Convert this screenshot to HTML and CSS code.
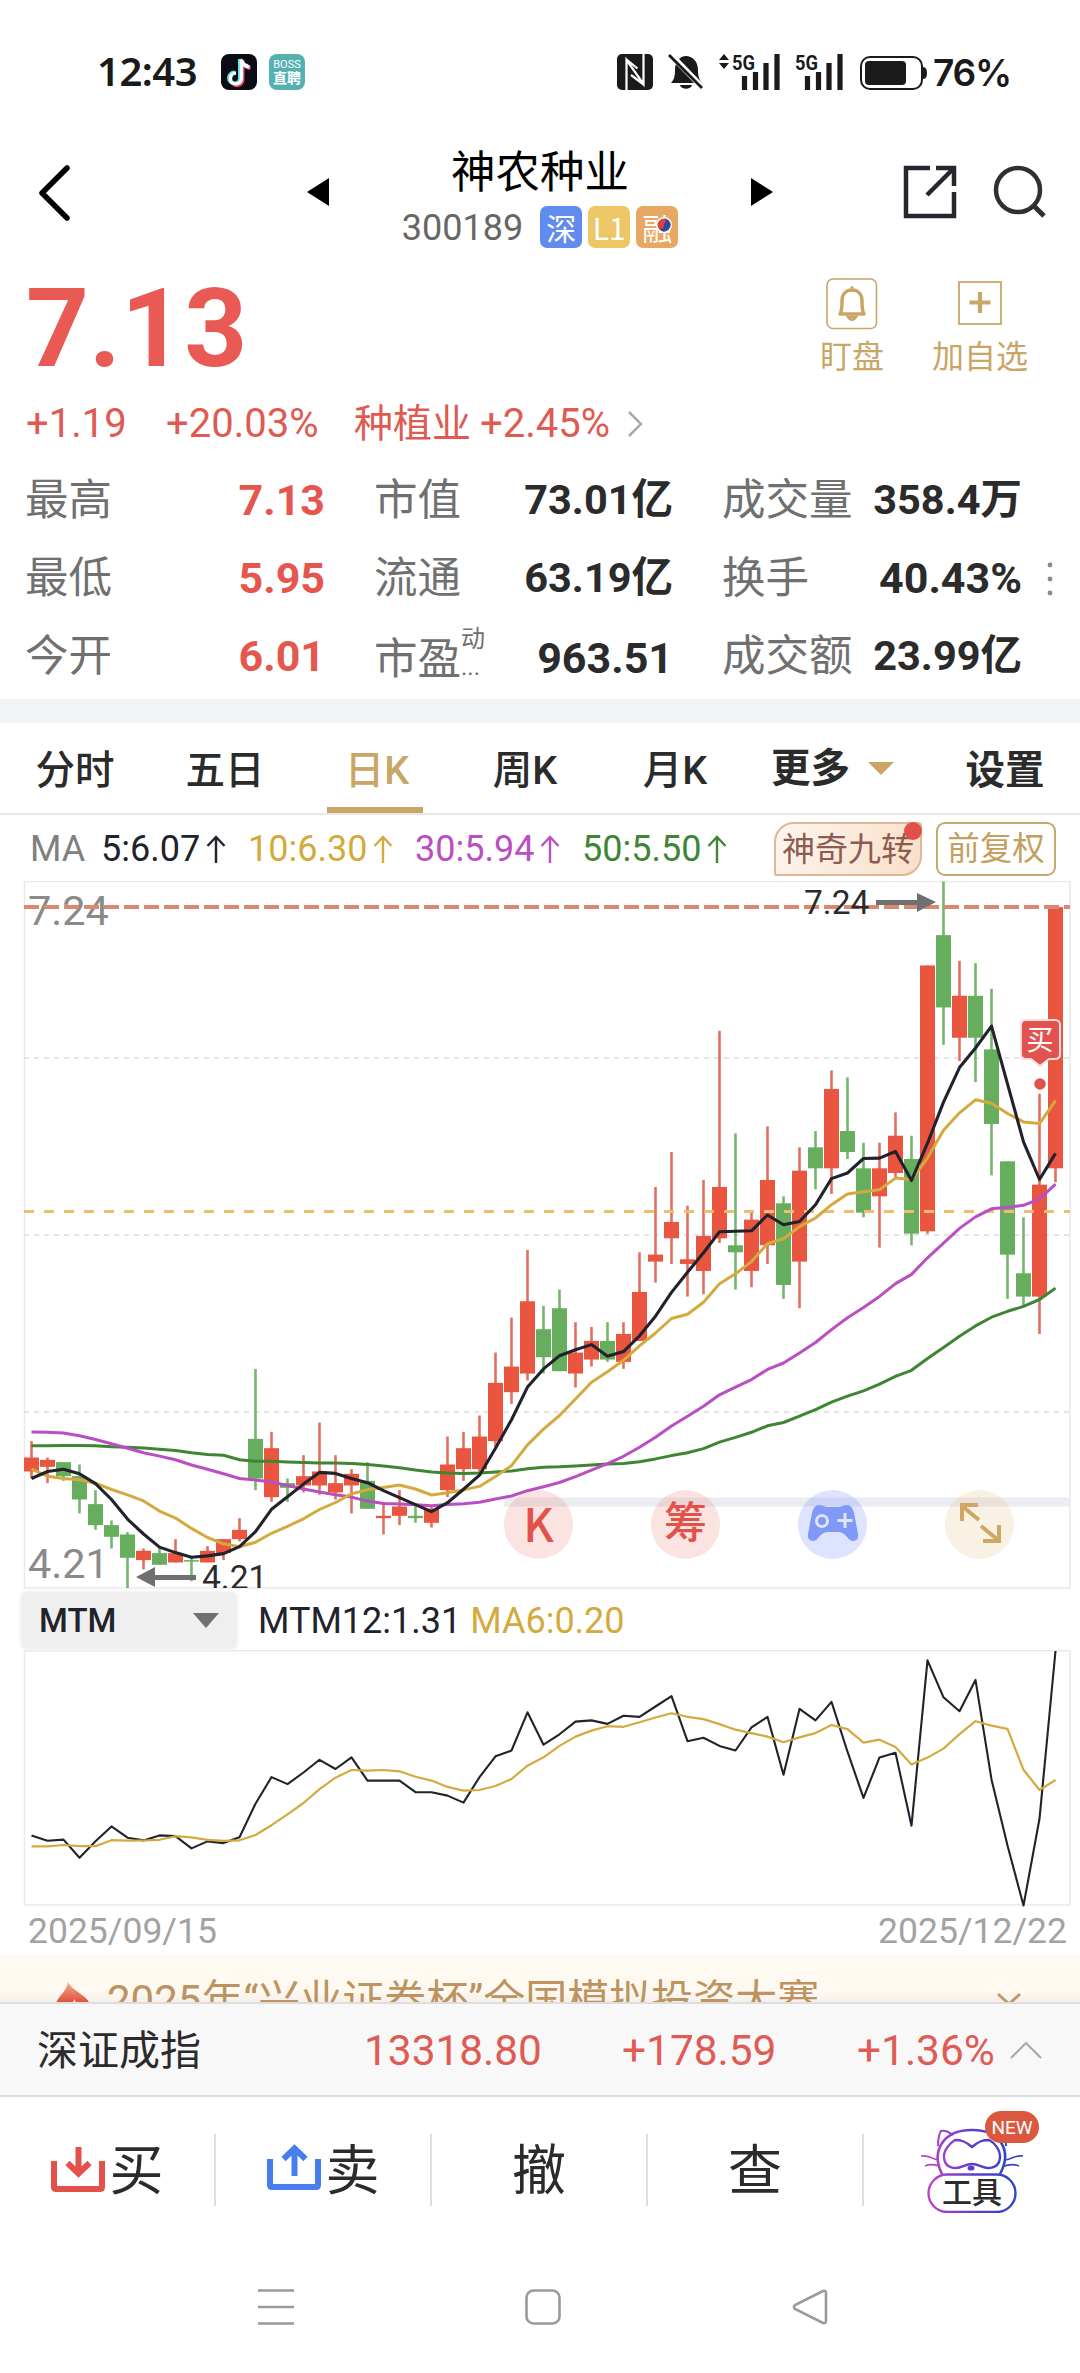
FILE: index.html
```html
<!DOCTYPE html>
<html lang="zh-CN">
<head>
    <meta charset="UTF-8">
    <meta name="viewport" content="width=device-width, initial-scale=1.0">
    <title>神农种业 300189</title>
    <link rel="stylesheet" href="styles.css">
</head>
<body>

<div class="status-bar">
    <span class="time">12:43</span>
    <svg class="app-icon" width="36" height="36" viewBox="0 0 36 36">
        <rect width="36" height="36" rx="8" fill="#0b0b16"/>
        <g fill="none">
            <path d="M19 5v19a5.500 5.500 0 1 1-5.500-5.500M19 5c1 4 4 6.500 8 7" stroke="#5fe3df" stroke-width="4"/>
            <path d="M21.500 7v19a5.500 5.500 0 0 1-9 4M21.500 7c1 4 4 6.500 8 7" stroke="#ee4058" stroke-width="4"/>
            <path d="M20.500 5.500v19a5.500 5.500 0 1 1-5.500-5.500M20.500 6c1 4 4 6.500 8 7" stroke="#fff" stroke-width="3.400"/>
        </g>
    </svg>
    <div class="boss-icon"><span>BOSS</span><b>直聘</b></div>
    <svg class="status-icons" width="320" height="42" viewBox="0 0 320 42">
        <rect x="0" y="3" width="36" height="36" rx="5" fill="#1a1a1a"/>
        <path d="M9.500 38V9l17 24V4M26.500 3v30.500L14 24M9.500 39V8.500l11 9" fill="none" stroke="#fff" stroke-width="2.200"/>
        <path d="M54 32c3-3 4-7 4-13 0-8 5-14 11-14s12 5 12 14c0 6 1 9 4 13zM63 34h12c-1 5-11 5-12 0z" fill="#1a1a1a"/>
        <path d="M54 4l32 33" stroke="#fff" stroke-width="6"/>
        <path d="M52 4l33 33" stroke="#1a1a1a" stroke-width="2.800"/>
        <path d="M102 9l5-6 5 6zM102 12h10l-5 6z" fill="#1a1a1a"/>
        <text x="115" y="19" class="net" textLength="23" lengthAdjust="spacingAndGlyphs">5G</text>
        <path d="M127.500 25v14M138.500 21v18M149 12v27M160 3v36" stroke="#1a1a1a" stroke-width="5.200"/>
        <text x="178" y="19" class="net" textLength="23" lengthAdjust="spacingAndGlyphs">5G</text>
        <path d="M190.500 25v14M201.500 21v18M212 12v27M223 3v36" stroke="#1a1a1a" stroke-width="5.200"/>
        <rect x="244" y="6" width="61" height="32" rx="9" fill="none" stroke="#1a1a1a" stroke-width="2"/>
        <rect x="248" y="10" width="41" height="24" rx="4" fill="#1a1a1a"/>
        <path d="M306 16q4 0 4 6t-4 6z" fill="#1a1a1a"/>
    </svg>
    <span class="battery">76%</span>
</div>

<header class="header">
    <svg class="back" width="34" height="58" viewBox="0 0 34 58"><path d="M30 4L5 29l25 25" fill="none" stroke="#000" stroke-width="5.500" stroke-linecap="round" stroke-linejoin="round"/></svg>
    <svg class="prev" width="22" height="28" viewBox="0 0 22 28"><path d="M22 0v28L0 14z"/></svg>
    <div class="stock">
        <h1>神农种业</h1>
        <div class="stock-code">
            <span>300189</span>
            <i class="badge blue">深</i>
            <i class="badge yellow">L1</i>
            <i class="badge orange">融
                <svg class="taiji" width="16" height="16" viewBox="0 0 16 16">
                    <circle cx="8" cy="8" r="8" fill="#fff"/>
                    <circle cx="8" cy="8" r="6.500" fill="#d8423f"/>
                    <path d="M8 1.500a6.500 6.500 0 0 1 0 13 4 4 0 0 1-4-3c3 1 4-1 4-3.500s2-3 2-4-1-2-2-2.500z" fill="#2c4ba0"/>
                </svg>
            </i>
        </div>
    </div>
    <svg class="next" width="22" height="28" viewBox="0 0 22 28"><path d="M0 0v28l22-14z"/></svg>
    <svg class="share" width="54" height="54" viewBox="0 0 54 54"><path d="M27 3H3v48h48V27M33 3h18v18M50 4L24 30" fill="none" stroke="#26262e" stroke-width="4.500"/></svg>
    <svg class="search" width="54" height="54" viewBox="0 0 54 54"><circle cx="25" cy="25" r="22" fill="none" stroke="#303030" stroke-width="4.500"/><path d="M40 40l11 11" stroke="#303030" stroke-width="5"/></svg>
</header>

<section class="quote">
    <div class="price">7.13</div>
    <div class="actions">
        <div class="action">
            <svg width="52" height="52" viewBox="0 0 52 52" fill="none" stroke="#c9a666">
                <rect x="1" y="1" width="49.500" height="49.500" rx="6" stroke-width="1.600"/>
                <path d="M14 36c2-3 2-6 2-13 0-7 4-11 10-11s10 4 10 11c0 7 0 10 2 13z" stroke-width="3.500" stroke-linejoin="round"/>
                <path d="M22 39h8q-4 6-8 0zM24.500 9.500h3" stroke-width="2.500"/>
            </svg>
            <span>盯盘</span>
        </div>
        <div class="action">
            <svg width="52" height="52" viewBox="0 0 52 52" fill="none" stroke="#c9a666">
                <rect x="5" y="4" width="42" height="42" stroke-width="1.800"/>
                <path d="M26 14v21M15.500 24.500h21" stroke-width="4.200"/>
            </svg>
            <span>加自选</span>
        </div>
    </div>
</section>

<div class="change">
    <span class="diff">+1.19</span>
    <span class="percent">+20.03%</span>
    <span class="sector-name">种植业</span>
    <span class="sector">+2.45%</span>
    <svg width="16" height="28" viewBox="0 0 16 28"><path d="M2 2l12 12L2 26" fill="none" stroke="#aaa" stroke-width="2.500"/></svg>
</div>

<section class="stats">
    <div class="stat"><span>最高</span><b class="up">7.13</b></div>
    <div class="stat"><span>市值</span><b class="unit">73.01亿</b></div>
    <div class="stat"><span>成交量</span><b class="unit">358.4万</b></div>
    <div class="stat"><span>最低</span><b class="up">5.95</b></div>
    <div class="stat"><span>流通</span><b class="unit">63.19亿</b></div>
    <div class="stat"><span>换手</span><b>40.43%</b></div>
    <div class="stat"><span>今开</span><b class="up">6.01</b></div>
    <div class="stat low"><span>市盈</span><small>动<br>...</small><b>963.51</b></div>
    <div class="stat"><span>成交额</span><b class="unit">23.99亿</b></div>
    <svg class="dots" width="6" height="36" viewBox="0 0 6 36" fill="#8a8a8a"><circle cx="3" cy="4" r="2.400"/><circle cx="3" cy="18" r="2.400"/><circle cx="3" cy="32" r="2.400"/></svg>
</section>

<nav class="tabs">
    <span>分时</span>
    <span>五日</span>
    <span class="active">日K</span>
    <span>周K</span>
    <span>月K</span>
    <span class="more">更多<i class="caret"></i></span>
    <span class="setting">设置</span>
</nav>

<div class="ma-row">
    <span class="ma-title">MA</span>
    <span class="ma ma5">5:6.07<svg width="20" height="28" viewBox="0 0 20 28"><path d="M10 28V2M1.500 11L10 2l8.500 9"/></svg></span>
    <span class="ma ma10">10:6.30<svg width="20" height="28" viewBox="0 0 20 28"><path d="M10 28V2M1.500 11L10 2l8.500 9"/></svg></span>
    <span class="ma ma30">30:5.94<svg width="20" height="28" viewBox="0 0 20 28"><path d="M10 28V2M1.500 11L10 2l8.500 9"/></svg></span>
    <span class="ma ma50">50:5.50<svg width="20" height="28" viewBox="0 0 20 28"><path d="M10 28V2M1.500 11L10 2l8.500 9"/></svg></span>
    <span class="btn-nine">神奇九转</span>
    <span class="btn-fq">前复权</span>
</div>

<div class="kline">
    <svg id="kline" width="1080" height="712" viewBox="0 0 1080 712"></svg>
    <div class="float-buttons">
        <span class="round red latin">K</span>
        <span class="round red">筹</span>
        <span class="round game">
            <svg width="52" height="38" viewBox="0 0 52 38">
                <path d="M12 1q4 0 7 2h14q3-2 7-2 5 0 7 8l4 21q1 7-5 7-3 0-6-4-4-5-9-5H21q-5 0-9 5-3 4-6 4-6 0-5-7L5 9q2-8 7-8z" fill="#8098f6"/>
                <circle cx="15" cy="17" r="5.500" fill="none" stroke="#dfe4ff" stroke-width="3"/>
                <path d="M38 9v15M30.500 16.500h15" stroke="#dfe4ff" stroke-width="3"/>
            </svg>
        </span>
        <span class="round full">
            <svg width="42" height="42" viewBox="0 0 42 42" fill="none" stroke="#cfa665" stroke-width="4">
                <path d="M3 19V3h16M3 4l17 14M40 23v16H24M39 38L22 24"/>
            </svg>
        </span>
    </div>
</div>

<div class="indicator">
    <div class="select">MTM<i class="caret grey"></i></div>
    <span>MTM12:1.31</span>
    <span class="gold">MA6:0.20</span>
</div>
<svg id="mtm" class="mtm" width="1080" height="259" viewBox="0 0 1080 259"></svg>
<div class="dates"><span>2025/09/15</span><span>2025/12/22</span></div>

<div class="banner">
    <svg class="flame" width="38" height="40" viewBox="0 0 38 40">
        <defs><linearGradient id="fire" x1="0" y1="0" x2="0" y2="1"><stop offset="0" stop-color="#f3b184"/><stop offset=".5" stop-color="#e2503f"/></linearGradient></defs>
        <path d="M14 0c-1 10-13 16-13 26 0 8 8 14 18 14s17-7 17-15c0-6-4-9-8-12-5-4-12-8-14-13z" fill="url(#fire)"/>
        <path d="M20 17c0 5-5 8-5 12 0 3 3 5 6 5s6-2 6-6-5-6-7-11z" fill="#fff"/>
    </svg>
    <span>2025年“兴业证券杯”全国模拟投资大赛</span>
    <svg class="down" width="26" height="14" viewBox="0 0 26 14"><path d="M2 2l11 10L24 2" fill="none" stroke="#c19a6b" stroke-width="3"/></svg>
</div>

<div class="index-bar">
    <span class="name">深证成指</span>
    <span class="point">13318.80</span>
    <span class="amount">+178.59</span>
    <span class="rate">+1.36%</span>
    <svg width="32" height="18" viewBox="0 0 32 18"><path d="M1 17L16 2l15 15" fill="none" stroke="#aaa" stroke-width="2.200"/></svg>
</div>

<footer class="trade">
    <div class="trade-item">
        <svg width="54" height="52" viewBox="0 0 54 52" fill="none" stroke="#e2524b"><path d="M3 17v26q0 2 2 2h44q2 0 2-2V17" stroke-width="6"/><path d="M27.500 3v25M16.500 19l11 10.500 11-10.500" stroke-width="6"/></svg>
        <span>买</span>
    </div>
    <div class="trade-item">
        <svg width="54" height="52" viewBox="0 0 54 52" fill="none" stroke="#477ded"><path d="M3 15v26q0 2 2 2h44q2 0 2-2V15" stroke-width="6"/><path d="M27.500 32V6M16.500 15l11-10.500 11 10.500" stroke-width="6"/></svg>
        <span>卖</span>
    </div>
    <div class="trade-item"><span>撤</span></div>
    <div class="trade-item"><span>查</span></div>
    <div class="trade-item">
        <div class="tool">
            <svg width="104" height="86" viewBox="0 0 104 86" fill="none" stroke="url(#neon)" stroke-width="2">
                <defs><linearGradient id="neon" gradientUnits="userSpaceOnUse" x1="10" y1="0" x2="96" y2="0"><stop offset="0" stop-color="#bb43c5"/><stop offset=".5" stop-color="#5b3ed0"/><stop offset="1" stop-color="#2948c4"/></linearGradient></defs>
                <path d="M22 47c-11-22 0-44 30-44s40 22 28 44" stroke-width="2.600"/>
                <path d="M18 19c0-8 1-12 3-15 4-1 8 1 12 4M86 19c0-8-1-12-3-15"/>
                <path d="M52 20C45 14 41 13 35 13c-5 3-11 10-11 16 0 8 4 12 12 12 6 0 9-4 16-4s10 4 16 4c8 0 12-4 12-12 0-6-5-13-11-16-6 0-10 1-17 7z" stroke-width="2.400"/>
                <path d="M1 29c9-1 10 3 18 4M5 39c6-3 10-1 15 0M103 29c-9-1-10 3-18 4M99 39c-6-3-10-1-15 0" stroke-width="1.600"/>
                <ellipse cx="51" cy="41" rx="3.500" ry="2.600" fill="#5b3ed0" stroke="none"/>
                <rect x="8.500" y="47.500" width="87" height="37.500" rx="18.700" fill="#fff" stroke-width="2.400"/>
            </svg>
            <b>工具</b>
            <em>NEW</em>
        </div>
    </div>
</footer>

<div class="sys-nav">
    <svg width="36" height="36" viewBox="0 0 36 36"><path d="M0 1.500h36M0 18h36M0 34.500h36"/></svg>
    <svg width="36" height="36" viewBox="0 0 36 36"><rect x="1.500" y="1.500" width="33" height="33" rx="7"/></svg>
    <svg width="36" height="36" viewBox="0 0 36 36"><path d="M31 2L3 16q-2 2 0 4l28 14q3 1 3-2V4q0-3-3-2z"/></svg>
</div>

<script src="chart.js"></script>
</body>
</html>
```
FILE: styles.css
```css
* {
    box-sizing: border-box;
}
body {
    margin: 0;
    width: 1080px;
    height: 2373px;
    overflow: hidden;
    background-color: #fff;
    color: #2b2b2b;
    font-family: Roboto, "Noto Sans CJK SC", sans-serif;
    display: flex;
    flex-direction: column;
}
body > * {
    flex: none;
}
svg {
    display: block;
    flex: none;
}
span, b {
    white-space: nowrap;
}

/* status bar */
.status-bar {
    height: 144px;
    padding-left: 97px;
    display: flex;
    align-items: center;
    color: #1a1a1a;
}
.time {
    width: 124px;
    font: 600 40px "Noto Sans", sans-serif;
    letter-spacing: -0.5px;
    margin-top: -3px;
}
.boss-icon {
    width: 36px;
    height: 36px;
    margin-left: 12px;
    border-radius: 8px;
    background-color: #55b1b1;
    color: #fff;
    text-align: center;
    font-size: 11px;
    line-height: 12px;
    padding-top: 5px;
    display: flex;
    flex-direction: column;
}
.boss-icon b {
    font-size: 14px;
    line-height: 15px;
}
.status-icons {
    margin-left: 312px;
}
.net {
    font: 700 21px Roboto, sans-serif;
    fill: #1a1a1a;
}
.battery {
    margin-left: -4px;
    margin-top: 1px;
    font: 600 37px Inter, sans-serif;
    letter-spacing: -1.2px;
}

/* title */
.header {
    height: 112px;
    display: flex;
    padding-left: 37px;
}
.back {
    margin-top: 20px;
}
.prev {
    margin: 34px 0 0 236px;
}
.stock {
    width: 422px;
    text-align: center;
}
.stock h1 {
    margin: 4px 0 0;
    font-size: 44.5px;
    line-height: 50px;
    font-weight: 400;
    color: #000;
}
.stock-code {
    display: flex;
    justify-content: center;
    align-items: center;
    gap: 6px;
    margin-top: 6px;
    font-size: 36px;
    color: #666;
}
.stock-code span {
    margin: 3px 11px 0 0;
}
.badge {
    position: relative;
    width: 42px;
    height: 42px;
    border-radius: 7px;
    font-style: normal;
    font-size: 30px;
    line-height: 42px;
    color: #fff;
    font-family: "Noto Sans CJK SC", sans-serif;
}
.blue { background-color: #5f8cee; }
.yellow { background-color: #edc766; }
.orange { background-color: #e8a763; }
.taiji {
    position: absolute;
    left: 20px;
    top: 11px;
}
.next {
    margin-top: 34px;
}
.share {
    margin: 21px 0 0 130px;
}
.search {
    margin: 21px 0 0 36px;
}

/* price */
.quote {
    height: 132px;
    padding-left: 26px;
    display: flex;
    justify-content: space-between;
    color: #ea5a54;
}
.price {
    font-size: 110px;
    line-height: 146px;
    font-weight: 700;
}
.actions {
    display: flex;
    padding: 22px 52px 0 0;
    gap: 48px;
}
.action {
    display: flex;
    flex-direction: column;
    align-items: center;
    color: #c9a666;
    font-size: 32px;
    line-height: 54px;
}
.change {
    height: 72px;
    padding-left: 26px;
    display: flex;
    align-items: center;
    color: #e05a52;
    font-size: 40px;
    line-height: 68px;
}
.diff {
    width: 140px;
}
.percent {
    width: 188px;
}
.sector-name {
    font-size: 39px;
    width: 126px;
}
.sector {
    width: 147px;
}

/* figures */
.stats {
    position: relative;
    height: 239px;
    padding: 1px 58px 0 25px;
    display: grid;
    grid-template-columns: 300px 299px 300px;
    column-gap: 49px;
    grid-auto-rows: 78px;
}
.stat {
    display: flex;
    align-items: center;
    justify-content: space-between;
    font-size: 43px;
    color: #707070;
}
.stat span {
    font-size: 43.5px;
    padding-bottom: 8px;
}
.stat b {
    color: #2b2b2b;
    margin-left: auto;
    padding-bottom: 1px;
}
.stat .up {
    color: #e5564f;
}
.stat .unit {
    font-size: 41.5px;
    padding-bottom: 8px;
}
.stat.low {
    padding-top: 6px;
}
.stat.low b {
    padding-bottom: 3px;
}
.stat small {
    font-size: 24px;
    line-height: 28px;
    margin-top: -12px;
}
.dots {
    position: absolute;
    left: 1047px;
    top: 101px;
}

/* period tabs */
.tabs {
    height: 116px;
    border-top: 24px solid #f2f3f5;
    border-bottom: 2px solid #e8e8e8;
    display: flex;
    align-items: center;
    font-size: 39.5px;
    font-weight: 500;
}
.tabs span {
    width: 150px;
    height: 90px;
    line-height: 95px;
    text-align: center;
}
.tabs .active {
    color: #c9a666;
    position: relative;
    padding-left: 4px;
}
.tabs .active::after {
    content: "";
    position: absolute;
    left: 27px;
    bottom: 0;
    width: 96px;
    height: 6px;
    background-color: #c9a666;
}
.tabs .more {
    width: 180px;
    padding-left: 21px;
    display: flex;
    align-items: center;
    gap: 18px;
    font-weight: 700;
}
.tabs .setting {
    font-weight: 700;
}
.caret {
    width: 0;
    height: 0;
    border: 13px solid transparent;
    border-top: 13px solid #c9a666;
    border-bottom: 0;
}

/* moving averages */
.ma-row {
    height: 66px;
    padding: 2px 24px 0 30px;
    display: flex;
    align-items: center;
    font-size: 36px;
}
.ma-title {
    width: 71px;
    color: #808080;
}
.ma {
    display: flex;
    align-items: center;
    gap: 6px;
    width: 167px;
}
.ma svg {
    fill: none;
    stroke: currentColor;
    stroke-width: 2.4;
}
.ma5 { color: #22222c; width: 147px; }
.ma10 { color: #d3aa3e; }
.ma30 { color: #b94fc0; }
.ma50 { color: #3f8534; }
.btn-nine {
    position: relative;
    margin-left: auto;
    width: 148px;
    height: 54px;
    border: 2px solid #dfb795;
    border-radius: 20px 4px 20px 2px;
    background: linear-gradient(110deg, #fdf5ee, #fadfc9);
    color: #8d5c4e;
    font-size: 33px;
    line-height: 51px;
    text-align: center;
}
.btn-nine::after {
    content: "";
    position: absolute;
    right: -2px;
    top: -2px;
    width: 18px;
    height: 18px;
    border-radius: 50%;
    background-color: #e2504a;
}
.btn-fq {
    margin-left: 14px;
    width: 120px;
    height: 54px;
    border: 2px solid #c4a86c;
    border-radius: 9px;
    color: #c4a05e;
    font-size: 32.5px;
    line-height: 50px;
    text-align: center;
}

/* charts */
.kline {
    position: relative;
    height: 712px;
}
.grid-text {
    font-size: 41.5px;
    fill: #8a8a8a;
}
.mark-text {
    font-size: 33.5px;
    fill: #2b2b2b;
}
.buy-text {
    font-size: 27px;
    fill: #fff;
    text-anchor: middle;
}
.float-buttons {
    position: absolute;
    left: 504px;
    top: 609px;
    display: flex;
    gap: 78px;
}
.round {
    width: 69px;
    height: 69px;
    border-radius: 50%;
    display: flex;
    align-items: center;
    justify-content: center;
    font-size: 43px;
    line-height: 60px;
    font-weight: 500;
    padding-bottom: 3px;
}
.red {
    background-color: rgba(226, 80, 60, 0.16);
    color: #e2524b;
}
.latin {
    font-family: "Noto Sans CJK SC", sans-serif;
    font-size: 46px;
    padding-bottom: 6px;
}
.game {
    background-color: rgba(90, 120, 255, 0.2);
}
.full {
    background-color: rgba(222, 170, 95, 0.16);
}
.indicator {
    height: 57px;
    padding: 0 0 2px 22px;
    display: flex;
    align-items: center;
    font-size: 36px;
    color: #22222c;
}
.select {
    width: 214px;
    height: 55px;
    padding: 0 17px 0 17px;
    border-radius: 4px;
    background-color: #efefef;
    box-shadow: 0 0 5px #ddd;
    display: flex;
    align-items: center;
    justify-content: space-between;
    font-size: 33px;
    font-weight: 500;
    margin-right: 22px;
}
.caret.grey {
    border-top: 15px solid #707070;
    border-bottom: 0;
}
.gold {
    color: #d3aa3e;
    margin-left: 9px;
}
.dates {
    height: 46px;
    padding: 0 13px 0 28px;
    display: flex;
    justify-content: space-between;
    font-size: 35.5px;
    line-height: 45px;
    color: #a2a2a2;
}
.banner {
    height: 47px;
    overflow: hidden;
    background: linear-gradient(#fefaf2 75%, #f5f1ea);
    display: flex;
    padding-left: 54px;
    font-size: 42px;
    line-height: 92px;
    color: #bd935f;
}
.flame {
    margin: 27px 15px 0 0;
}
.down {
    margin: 37px 58px 0 auto;
}

/* index */
.index-bar {
    height: 95px;
    border-top: 2px solid #dedede;
    border-bottom: 2px solid #dedede;
    background-color: #f8f8f8;
    padding: 2px 38px 0 37px;
    display: flex;
    align-items: center;
    font-size: 42.4px;
    line-height: 92px;
    color: #de5c55;
}
.index-bar svg {
    margin-top: -2px;
}
.name {
    width: 327px;
    font-size: 41px;
    color: #2b2b2b;
}
.point {
    width: 258px;
}
.amount {
    width: 235px;
}
.rate {
    width: 153px;
}
.trade {
    height: 145px;
    display: flex;
    align-items: center;
}
.trade-item {
    width: 216px;
    height: 72px;
    display: flex;
    align-items: center;
    justify-content: center;
    gap: 5px;
    font-size: 54px;
    line-height: 72px;
    border-right: 2px solid #e0e0e0;
}
.trade-item:last-child {
    border-right: 0;
}
.trade-item span {
    padding-top: 5px;
}
.tool {
    position: relative;
    width: 104px;
    height: 86px;
}
.tool b {
    position: absolute;
    left: 22px;
    top: 46px;
    font-size: 30px;
    line-height: 40px;
    font-weight: 500;
}
.tool em {
    position: absolute;
    left: 65px;
    top: -16px;
    width: 54px;
    height: 32px;
    border-radius: 16px;
    background-color: #db583f;
    color: #fff;
    font: 19px/33px Roboto, sans-serif;
    text-align: center;
}
.sys-nav {
    padding: 47px 252px 0 258px;
    display: flex;
    justify-content: space-between;
}
.sys-nav svg {
    fill: none;
    stroke: #9a9a9a;
    stroke-width: 2.6;
}
```
FILE: chart.js
```js
// [up, high, body top, body bottom, low]
const candles = [
    [1,4.84,4.77,4.71,4.68],[1,4.77,4.76,4.73,4.66],[0,4.75,4.75,4.69,4.67],[0,4.74,4.69,4.59,4.53],
    [0,4.63,4.57,4.48,4.46],[0,4.50,4.48,4.43,4.38],[0,4.45,4.44,4.34,4.21],[1,4.38,4.37,4.33,4.29],
    [0,4.39,4.36,4.31,4.31],[1,4.42,4.36,4.32,4.32],[0,4.34,4.33,4.33,4.24],[1,4.39,4.37,4.32,4.32],
    [1,4.42,4.42,4.36,4.33],[1,4.51,4.46,4.42,4.41],[0,5.15,4.85,4.68,4.63],[1,4.88,4.81,4.60,4.58],
    [0,4.68,4.66,4.64,4.58],[1,4.78,4.69,4.65,4.62],[1,4.92,4.71,4.65,4.61],[1,4.78,4.66,4.62,4.59],
    [1,4.72,4.70,4.65,4.53],[0,4.75,4.67,4.55,4.55],[1,4.58,4.52,4.51,4.44],[1,4.63,4.56,4.52,4.48],
    [0,4.57,4.52,4.51,4.49],[1,4.56,4.55,4.49,4.47],[1,4.86,4.74,4.63,4.60],[1,4.88,4.81,4.72,4.67],
    [1,4.95,4.86,4.72,4.70],[1,5.22,5.09,4.84,4.81],[1,5.37,5.16,5.05,5.00],[1,5.66,5.44,5.13,5.10],
    [0,5.42,5.32,5.20,5.13],[0,5.49,5.41,5.14,5.14],[1,5.35,5.22,5.13,5.07],[1,5.33,5.27,5.19,5.16],
    [0,5.35,5.27,5.19,5.18],[1,5.35,5.30,5.18,5.15],[1,5.65,5.48,5.27,5.27],[1,5.93,5.64,5.61,5.52],
    [1,6.08,5.78,5.71,5.60],[1,5.85,5.62,5.60,5.46],[1,5.96,5.72,5.57,5.47],[1,6.60,5.93,5.71,5.69],
    [0,6.16,5.68,5.65,5.49],[1,5.82,5.79,5.57,5.50],[1,6.19,5.96,5.68,5.60],[0,5.89,5.86,5.51,5.45],
    [1,6.10,6.00,5.61,5.41],[0,6.17,6.10,6.01,5.92],[1,6.43,6.35,6.01,5.90],[0,6.40,6.17,6.08,6.05],
    [0,6.12,6.01,5.82,5.80],[1,6.12,6.01,5.89,5.67],[1,6.25,6.15,5.99,5.97],[0,6.15,6.05,5.73,5.68],
    [1,6.88,6.88,5.74,5.73],[0,7.24,7.01,6.70,6.54],[1,6.90,6.75,6.57,6.47],[0,6.89,6.75,6.57,6.38],
    [0,6.78,6.52,6.20,5.98],[0,6.04,6.04,5.64,5.45],[0,5.80,5.56,5.46,5.42],[1,6.33,5.94,5.46,5.30],
    [1,7.13,7.13,6.01,5.95]
];

// values before the window has enough candles of its own
const ma5Start = [4.68,4.71,4.72,4.70];
const ma10Start = [4.72,4.69,4.68,4.675,4.66,4.633,4.61,4.584,4.54];
const ma30Start = [4.88,4.878,4.875,4.863,4.847,4.829,4.81,4.79,4.776,4.76,4.738,4.72,4.70,4.68,4.674,
    4.665,4.65,4.635,4.622,4.61,4.60,4.583,4.573,4.571,4.567,4.563,4.568,4.572,4.578];
const ma50Start = [4.82,4.82,4.822,4.822,4.82,4.816,4.814,4.811,4.805,4.80,4.79,4.783,4.78,4.76,4.754,4.754,
    4.751,4.748,4.746,4.746,4.744,4.74,4.734,4.726,4.716,4.708,4.704,4.702,4.704,4.708,4.712,4.722,4.728,
    4.73,4.734,4.738,4.742,4.744,4.752,4.764,4.778,4.79,4.808,4.836,4.856,4.878,4.906,4.92,4.947];
const mtmStart = [-.284,-.33,-.32,-.477,-.335,-.206,-.304,-.327,-.284,-.29,-.396,-.336];
const mtmMaStart = [-.379,-.379,-.367,-.376,-.376];

const close = candles.map(c => c[0] ? c[2] : c[3]);

function average(values, n, start) {
    return values.map((v, i) => {
        if (i < start.length) return start[i];
        return values.slice(i - n + 1, i + 1).reduce((a, b) => a + b, 0) / n;
    });
}

const cx = i => 31.5 + i * 16;
const y = p => 0.5 + (7.24 - p) * 233.2;
const my = v => 1 + (1.31 - v) * 115.7;

function line(values, scale, color, width) {
    const points = values.map((v, i) => cx(i) + ',' + scale(v).toFixed(1)).join(' ');
    return `<polyline points="${points}" fill="none" stroke="${color}" stroke-width="${width}" stroke-linejoin="round"/>`;
}

function dash(top, color, width, pattern) {
    return `<path d="M24 ${top}H1070" stroke="${color}" stroke-width="${width}" stroke-dasharray="${pattern}"/>`;
}

let k = '<rect x="24.500" y="0.500" width="1045.500" height="706.500" fill="none" stroke="#e9e9e9" stroke-width="1.500"/>';
k += dash(177, '#ddd', 1.6, '5 5') + dash(354, '#ddd', 1.6, '5 5') + dash(531, '#ddd', 1.6, '5 5');
k += '<rect x="504" y="616.500" width="566" height="9" fill="#ecedf2"/>';
k += '<text x="28" y="44" class="grid-text">7.24</text><text x="28" y="697" class="grid-text">4.21</text>';
candles.forEach((c, i) => {
    const color = c[0] ? '#ea5540' : '#66ad5e';
    const wick = c[0] ? '#e0705f' : '#74b66d';
    k += `<path d="M${cx(i)} ${y(c[1])}V${y(c[4])}" stroke="${wick}" stroke-width="2.600"/>`;
    k += `<rect x="${cx(i) - 7.5}" y="${y(c[2])}" width="15" height="${Math.max(1.5, y(c[3]) - y(c[2]))}" fill="${color}"/>`;
});
k += dash(26, '#dc8870', 4, '15 5') + dash(330.5, '#f0bc70', 3.2, '10 10');
k += line(average(close, 50, ma50Start), y, '#3f8534', 3);
k += line(average(close, 30, ma30Start), y, '#b94fc0', 3);
k += line(average(close, 10, ma10Start), y, '#d3aa3e', 3);
k += line(average(close, 5, ma5Start), y, '#22222c', 3.1);
k += '<text x="804" y="33" class="mark-text">7.24</text><path d="M876 19h41v-7l19 9-19 10v-7h-41z" fill="#707070"/>';
k += '<svg width="1080" height="707"><text x="202" y="708" class="mark-text">4.21</text></svg><path d="M196 694h-41v-8l-19 10 19 10v-7h41z" fill="#707070"/>';
// buy marker
k += '<path d="M1026 139h29q5 0 5 5v29q0 5-5 5h-6l-9 7-9-7h-5q-5 0-5-5v-29q0-5 5-5z" fill="#e2534f" stroke="#f8dcda" stroke-width="2"/>';
k += '<text x="1040" y="169" class="buy-text">买</text><circle cx="1040" cy="203" r="6.500" fill="#e2504a" stroke="#fff" stroke-width="1.500"/>';
document.getElementById('kline').innerHTML = k;

const mtm = close.map((v, i) => i < 12 ? mtmStart[i] : v - close[i - 12]);
document.getElementById('mtm').innerHTML =
    '<rect x="24.500" y="0.700" width="1045.500" height="254.300" fill="none" stroke="#e9e9e9" stroke-width="1.500"/>' +
    line(mtm, my, '#22222c', 2.1) + line(average(mtm, 6, mtmMaStart), my, '#d3aa3e', 2.2);
```
